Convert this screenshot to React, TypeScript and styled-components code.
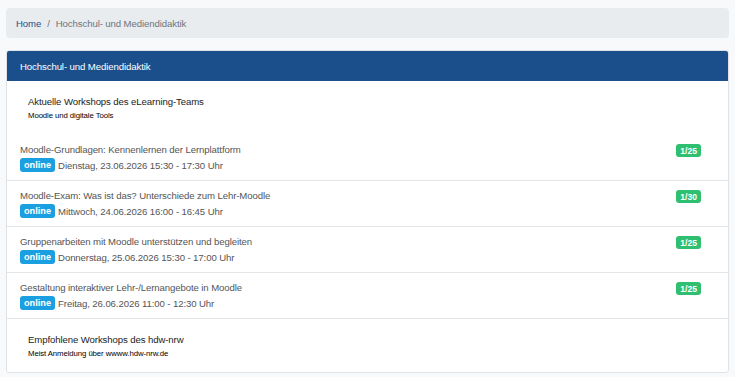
import styled, { createGlobalStyle } from 'styled-components';

const GlobalStyle = createGlobalStyle`
  body {
    margin: 0;
    background: #f8f9fa;
    font-family: "Liberation Sans", Arial, sans-serif;
  }
`;

type Workshop = {
  title: string;
  date: string;
  seats: string;
};

const workshops: Workshop[] = [
  {
    title: 'Moodle-Grundlagen: Kennenlernen der Lernplattform',
    date: 'Dienstag, 23.06.2026 15:30 - 17:30 Uhr',
    seats: '1/25',
  },
  {
    title: 'Moodle-Exam: Was ist das? Unterschiede zum Lehr-Moodle',
    date: 'Mittwoch, 24.06.2026 16:00 - 16:45 Uhr',
    seats: '1/30',
  },
  {
    title: 'Gruppenarbeiten mit Moodle unterstützen und begleiten',
    date: 'Donnerstag, 25.06.2026 15:30 - 17:00 Uhr',
    seats: '1/25',
  },
  {
    title: 'Gestaltung interaktiver Lehr-/Lernangebote in Moodle',
    date: 'Freitag, 26.06.2026 11:00 - 12:30 Uhr',
    seats: '1/25',
  },
];

function App() {
  return (
    <Page>
      <GlobalStyle />
      <Breadcrumb>
        <Crumb href="#">Home</Crumb>
        <Separator>/</Separator>
        <Current>Hochschul- und Mediendidaktik</Current>
      </Breadcrumb>
      <Card>
        <CardHeader>Hochschul- und Mediendidaktik</CardHeader>
        <Section>
          <SectionTitle>Aktuelle Workshops des eLearning-Teams</SectionTitle>
          <SectionSub>Moodle und digitale Tools</SectionSub>
        </Section>
        {workshops.map((w) => (
          <Item key={w.title}>
            <ItemMain>
              <ItemTitle>{w.title}</ItemTitle>
              <ItemMeta>
                <OnlineBadge>online</OnlineBadge>
                {w.date}
              </ItemMeta>
            </ItemMain>
            <SeatsBadge>{w.seats}</SeatsBadge>
          </Item>
        ))}
        <Section $last>
          <SectionTitle>Empfohlene Workshops des hdw-nrw</SectionTitle>
          <SectionSub>Meist Anmeldung über wwww.hdw-nrw.de</SectionSub>
        </Section>
      </Card>
    </Page>
  );
}

export default App;

const Page = styled.div`
  display: flex;
  flex-direction: column;
  gap: 12px;
  padding: 8px 6px 4px 6px;
`;

const Breadcrumb = styled.nav`
  display: flex;
  align-items: center;
  height: 30px;
  padding: 0 10px;
  background: #e9ecef;
  border-radius: 4px;
  font-size: 9.6px;
  letter-spacing: -0.1px;
`;

const Crumb = styled.a`
  color: #1a5290;
  text-decoration: none;
`;

const Separator = styled.span`
  color: #6c757d;
  padding: 0 6px;
`;

const Current = styled.span`
  color: #6c757d;
`;

const Card = styled.div`
  display: flex;
  flex-direction: column;
  background: #fff;
  border: 1px solid #dfe3e7;
  border-radius: 3px;
  overflow: hidden;
`;

const CardHeader = styled.div`
  display: flex;
  align-items: center;
  height: 30px;
  padding: 0 13px;
  background: #1b4f8c;
  color: #fff;
  font-size: 9.6px;
  letter-spacing: -0.1px;
`;

const Section = styled.div<{ $last?: boolean }>`
  display: flex;
  flex-direction: column;
  gap: 3px;
  padding: ${(p) => (p.$last ? '15px 21px 13px' : '15px 21px 14px')};
`;

const SectionTitle = styled.div`
  font-size: 9.6px;
  line-height: 12px;
  color: #222;
  letter-spacing: -0.1px;
`;

const SectionSub = styled.div`
  font-size: 7.8px;
  line-height: 10px;
  color: #000;
  letter-spacing: -0.1px;
`;

const Item = styled.div`
  display: flex;
  justify-content: space-between;
  align-items: flex-start;
  padding: 9px 27px 8px 13px;
  border-bottom: 1px solid #e3e6e9;
`;

const ItemMain = styled.div`
  display: flex;
  flex-direction: column;
  gap: 2px;
`;

const ItemTitle = styled.div`
  font-size: 9.6px;
  line-height: 12px;
  color: #555;
  letter-spacing: -0.1px;
`;

const ItemMeta = styled.div`
  display: flex;
  align-items: center;
  gap: 3px;
  height: 14px;
  font-size: 9.6px;
  color: #555;
  letter-spacing: -0.1px;
`;

const OnlineBadge = styled.span`
  display: inline-flex;
  align-items: center;
  height: 14px;
  padding: 0 4px;
  border-radius: 3px;
  background: #1a9fe0;
  color: #fff;
  font-weight: bold;
  font-size: 9.2px;
  letter-spacing: 0;
`;

const SeatsBadge = styled.span`
  display: inline-flex;
  align-items: center;
  height: 13px;
  padding: 0 4px;
  border-radius: 3px;
  background: #2fbf71;
  color: #fff;
  font-weight: bold;
  font-size: 8.6px;
  letter-spacing: 0;
`;
